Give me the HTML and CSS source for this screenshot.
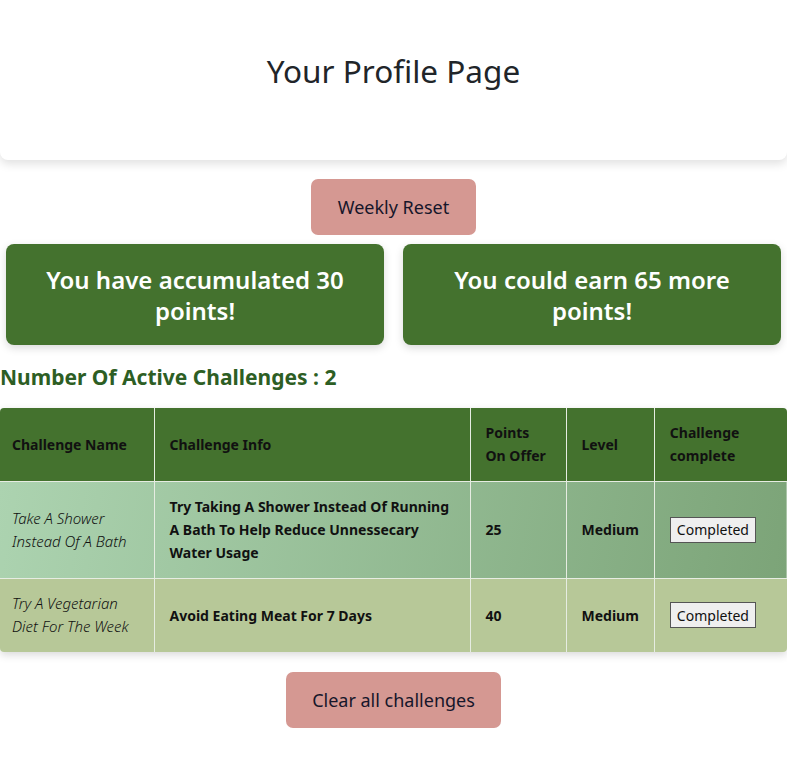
FILE: index.html
```html
<!DOCTYPE html>
<html>
<head>
<meta charset="utf-8">
<link rel="stylesheet" href="styles.css">
</head>
<body>
<header class="hero">
  <h1 class="hero-title">Your Profile Page</h1>
</header>
<div class="actions">
  <button class="pink-btn reset-btn">Weekly Reset</button>
</div>
<div class="stats">
  <div class="stat-card">You have accumulated 30 points!</div>
  <div class="stat-card">You could earn 65 more points!</div>
</div>
<h2 class="active-title">Number Of Active Challenges : 2</h2>
<div class="table-wrap">
<table class="challenges">
  <thead>
    <tr>
      <th class="c-name">Challenge Name</th>
      <th class="c-info">Challenge Info</th>
      <th class="c-pts">Points On Offer</th>
      <th class="c-lvl">Level</th>
      <th class="c-done">Challenge complete</th>
    </tr>
  </thead>
  <tbody>
    <tr class="row-a">
      <td class="name">Take A Shower Instead Of A Bath</td>
      <td class="bold">Try Taking A Shower Instead Of Running A Bath To Help Reduce Unnessecary Water Usage</td>
      <td class="bold">25</td>
      <td class="bold">Medium</td>
      <td><button class="done-btn">Completed</button></td>
    </tr>
    <tr class="row-b">
      <td class="name">Try A Vegetarian Diet For The Week</td>
      <td class="bold">Avoid Eating Meat For 7 Days</td>
      <td class="bold">40</td>
      <td class="bold">Medium</td>
      <td><button class="done-btn">Completed</button></td>
    </tr>
  </tbody>
</table>
</div>
<div class="actions bottom">
  <button class="pink-btn clear-btn">Clear all challenges</button>
</div>
</body>
</html>
```
FILE: styles.css
```css
* { box-sizing: border-box; }
body {
  margin: 0;
  font-family: "Noto Sans", "Open Sans", sans-serif;
  color: #212529;
  background: #fff;
}
.hero {
  height: 160px;
  background: #fff;
  border-radius: 0 0 8px 8px;
  box-shadow: 0 4px 10px rgba(0,0,0,0.12);
  display: flex;
  align-items: center;
  justify-content: center;
  padding-bottom: 20px;
}
.hero-title {
  margin: 0;
  font-size: 31.5px;
  font-weight: 400;
}
.actions {
  display: flex;
  justify-content: center;
  padding-top: 19px;
}
.pink-btn {
  background: #d59892;
  border: none;
  border-radius: 7px;
  height: 56px;
  font-family: inherit;
  font-size: 18px;
  font-weight: 400;
  color: #16162a;
}
.reset-btn { width: 165px; }
.clear-btn { width: 215px; }
.stats {
  display: grid;
  grid-template-columns: 378px 378px;
  gap: 19px;
  padding: 9px 6px 0 6px;
}
.stat-card {
  background: #44722e;
  color: #fff;
  border-radius: 8px;
  height: 101px;
  display: flex;
  align-items: center;
  justify-content: center;
  text-align: center;
  font-size: 24px;
  font-weight: 600;
  line-height: 31px;
  padding: 0 40px;
  box-shadow: 0 3px 8px rgba(0,0,0,0.15);
}
.active-title {
  margin: 18px 0 0 0;
  font-size: 21px;
  font-weight: 700;
  color: #2d5e24;
  line-height: 28px;
}
.table-wrap {
  margin-top: 17px;
  border-radius: 4px;
  overflow: hidden;
  box-shadow: 0 3px 8px rgba(0,0,0,0.15);
}
.challenges {
  width: 100%;
  border-collapse: collapse;
  font-size: 14px;
  color: #111;
}
.challenges th, .challenges td {
  border: 1px solid #e6ece2;
  text-align: left;
  padding: 0 15px;
  line-height: 23px;
}
.challenges tr > :first-child { border-left: none; padding-left: 12px; }
.challenges tr > :last-child { border-right: none; }
.challenges thead tr > * { border-top: none; }
.challenges tbody tr:last-child > * { border-bottom: none; }
.challenges th {
  background: #44722e;
  height: 73px;
  font-weight: 700;
}
.c-name { width: 154px; }
.c-info { width: 316px; }
.c-pts { width: 96px; }
.c-lvl { width: 87px; }
.row-a {
  background-image: linear-gradient(100deg, #acd3b0, #7ca478);
}
.row-a td {
  height: 97px;
  background: transparent;
}
.row-b td {
  height: 74px;
  background: #b7c898;
}
.name {
  font-style: italic;
  font-weight: 300;
  font-size: 15px;
}
.bold { font-weight: 700; }
.done-btn {
  font-family: "Noto Sans", sans-serif;
  font-size: 14px;
  font-weight: 400;
  background: #efefef;
  border: 1px solid #555;
  border-radius: 0;
  padding: 1px 6px;
  height: 26px;
  color: #111;
}
.bottom { padding-top: 20px; padding-bottom: 29px; }
```
